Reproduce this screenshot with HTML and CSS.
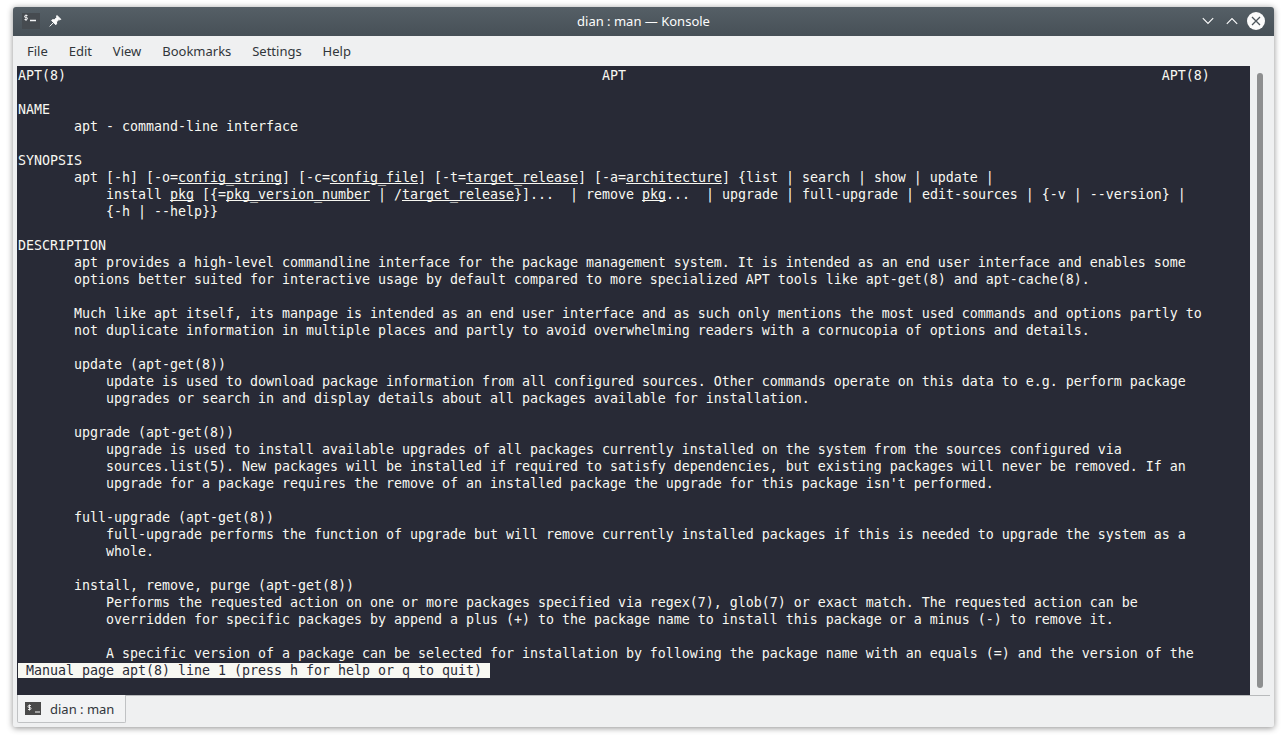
FILE: index.html
```html
<!DOCTYPE html>
<html lang="en">
<head>
<meta charset="utf-8">
<title>dian : man — Konsole</title>
<link rel="stylesheet" href="styles.css">
</head>
<body>
<div class="window">
  <header class="titlebar">
    <div class="tb-left">
      <svg width="18" height="16" viewBox="0 0 18 16"><rect width="18" height="16" fill="#464b50"/><path d="M5.500 2.500H3.500a1 1 0 0 0 0 2h1a1 1 0 0 1 0 2H2.500M4 1.500v6.500" stroke="#f2f3f4" stroke-width="1" fill="none"/><path d="M8 7.500h6" stroke="#f2f3f4" stroke-width="1.300"/></svg>
      <svg width="14" height="14" viewBox="0 0 14 14"><path d="M9 1.500 12.800 5.300l-1 .5-1-.2-2.300 2.300.1 2-.8.8L3.600 6.500l.8-.8 2 .1 2.300-2.300-.2-1zM5.400 8.700 1.700 12.400" fill="#fcfcfc" stroke="#fcfcfc" stroke-width="1" stroke-linejoin="round"/></svg>
    </div>
    <div class="tb-title">dian : man — Konsole</div>
    <div class="tb-right">
      <svg class="btn-min" width="12" height="8" viewBox="0 0 12 8"><path d="M.8 1.200 6 6.400l5.200-5.200" fill="none" stroke="#fcfcfc" stroke-width="1.100"/></svg>
      <svg width="12" height="8" viewBox="0 0 12 8"><path d="M.8 6.800 6 1.600l5.200 5.200" fill="none" stroke="#fcfcfc" stroke-width="1.100"/></svg>
      <svg width="18" height="18" viewBox="0 0 18 18"><circle cx="9" cy="9" r="9" fill="#fcfcfc"/><path d="m5 5 8 8M13 5l-8 8" stroke="#4d565c" stroke-width="1.300"/></svg>
    </div>
  </header>
  <nav class="menubar">
    <span class="menu-item">File</span>
    <span class="menu-item">Edit</span>
    <span class="menu-item">View</span>
    <span class="menu-item">Bookmarks</span>
    <span class="menu-item">Settings</span>
    <span class="menu-item">Help</span>
  </nav>
  <main class="content">
    <div class="terminal">
      <div class="screen">
        <div class="line">APT(8)                                                                   APT                                                                   APT(8)</div>
        <div class="line"></div>
        <div class="line">NAME</div>
        <div class="line">       apt - command-line interface</div>
        <div class="line"></div>
        <div class="line">SYNOPSIS</div>
        <div class="line">       apt [-h] [-o=<u>config_string</u>] [-c=<u>config_file</u>] [-t=<u>target_release</u>] [-a=<u>architecture</u>] {list | search | show | update |</div>
        <div class="line">           install <u>pkg</u> [{=<u>pkg_version_number</u> | /<u>target_release</u>}]...  | remove <u>pkg</u>...  | upgrade | full-upgrade | edit-sources | {-v | --version} |</div>
        <div class="line">           {-h | --help}}</div>
        <div class="line"></div>
        <div class="line">DESCRIPTION</div>
        <div class="line">       apt provides a high-level commandline interface for the package management system. It is intended as an end user interface and enables some</div>
        <div class="line">       options better suited for interactive usage by default compared to more specialized APT tools like apt-get(8) and apt-cache(8).</div>
        <div class="line"></div>
        <div class="line">       Much like apt itself, its manpage is intended as an end user interface and as such only mentions the most used commands and options partly to</div>
        <div class="line">       not duplicate information in multiple places and partly to avoid overwhelming readers with a cornucopia of options and details.</div>
        <div class="line"></div>
        <div class="line">       update (apt-get(8))</div>
        <div class="line">           update is used to download package information from all configured sources. Other commands operate on this data to e.g. perform package</div>
        <div class="line">           upgrades or search in and display details about all packages available for installation.</div>
        <div class="line"></div>
        <div class="line">       upgrade (apt-get(8))</div>
        <div class="line">           upgrade is used to install available upgrades of all packages currently installed on the system from the sources configured via</div>
        <div class="line">           sources.list(5). New packages will be installed if required to satisfy dependencies, but existing packages will never be removed. If an</div>
        <div class="line">           upgrade for a package requires the remove of an installed package the upgrade for this package isn't performed.</div>
        <div class="line"></div>
        <div class="line">       full-upgrade (apt-get(8))</div>
        <div class="line">           full-upgrade performs the function of upgrade but will remove currently installed packages if this is needed to upgrade the system as a</div>
        <div class="line">           whole.</div>
        <div class="line"></div>
        <div class="line">       install, remove, purge (apt-get(8))</div>
        <div class="line">           Performs the requested action on one or more packages specified via regex(7), glob(7) or exact match. The requested action can be</div>
        <div class="line">           overridden for specific packages by append a plus (+) to the package name to install this package or a minus (-) to remove it.</div>
        <div class="line"></div>
        <div class="line">           A specific version of a package can be selected for installation by following the package name with an equals (=) and the version of the</div>
        <div class="line"><span class="status"> Manual page apt(8) line 1 (press h for help or q to quit) </span></div>
      </div>
    </div>
    <div class="scrollbar"><div class="thumb"></div></div>
  </main>
  <footer class="tabbar">
    <div class="tab">
      <svg width="16" height="13" viewBox="0 0 16 13"><rect width="16" height="13" fill="#4a4a4a"/><path d="M6 3.500H4a1 1 0 0 0 0 2h1a1 1 0 0 1 0 2H3M4.500 2.500v6" stroke="#f5f5f5" stroke-width=".9" fill="none"/><path d="M10 10h5" stroke="#f5f5f5" stroke-width="1.200"/></svg>
      <span>dian : man</span>
    </div>
  </footer>
</div>
</body>
</html>
```
FILE: styles.css
```css
* { box-sizing: border-box; }
html, body { margin: 0; height: 100%; }
body {
  background: #fff;
  padding: 7px 13px 0;
  overflow: hidden;
  font-family: "Noto Sans", sans-serif;
}
.window {
  width: 1261px;
  height: 720px;
  display: flex;
  flex-direction: column;
  background: #eff0f1;
  border-radius: 3px 3px 2px 2px;
  box-shadow: 0 1px 6px rgba(0,0,0,.45);
  overflow: hidden;
}
.titlebar {
  height: 29px;
  flex: none;
  display: grid;
  grid-template-columns: 1fr auto 1fr;
  align-items: center;
  background: linear-gradient(#555f66, #475057);
  color: #fcfcfc;
  padding: 0 9px 1px;
}
.tb-left { display: flex; align-items: center; gap: 8px; }
.tb-right { display: flex; align-items: center; justify-content: flex-end; gap: 9px; }
.btn-min { margin-right: 3px; }
.tb-title { font-size: 13px; color: #fcfcfc; }
.menubar {
  height: 30px;
  flex: none;
  display: flex;
  align-items: center;
  gap: 20.900px;
  padding: 0 14px;
  font-size: 13px;
  color: #31363b;
}
.content {
  flex: none;
  height: 629px;
  display: flex;
  margin-left: 4px;
}
.terminal {
  width: 1233px;
  background: #282a36;
  padding: 1px 0 0 1px;
  overflow: hidden;
}
.screen {
  font: 13.300px/17px "DejaVu Sans Mono", monospace;
  letter-spacing: -.007px;
  color: #f8f8f2;
}
.line {
  height: 17px;
  white-space: pre;
}
.screen u {
  text-decoration-thickness: 1px;
  text-underline-offset: 1px;
  text-decoration-skip-ink: none;
}
.status { background: #f8f8f2; color: #282a36; }
.scrollbar {
  flex: 1;
  padding: 7px 0 7px 7px;
}
.thumb {
  width: 6px;
  height: 100%;
  border-radius: 3px;
  background: #8e8f90;
}
.tabbar {
  flex: 1;
  display: flex;
  align-items: flex-start;
  border-top: 1px solid #b8babc;
  margin: 0 4px;
}
.tab {
  margin-top: -1px;
  width: 109px;
  height: 28px;
  display: flex;
  align-items: center;
  gap: 9px;
  padding-left: 7px;
  font-size: 13px;
  color: #31363b;
  background: #f2f3f4;
  border: 1px solid #c0c2c4;
  border-top: none;
  border-radius: 0 0 2px 2px;
}
```
